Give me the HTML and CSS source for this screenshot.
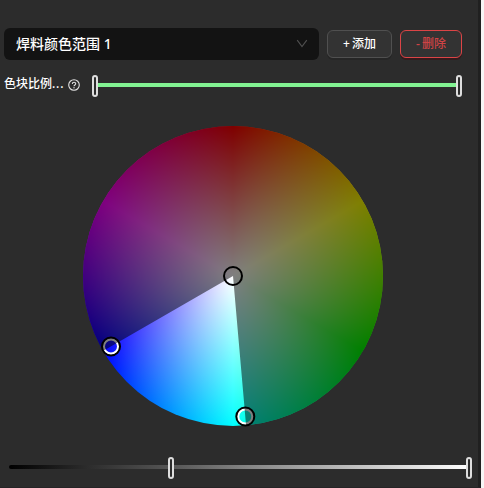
FILE: index.html
```html
<!DOCTYPE html>
<html lang="zh-CN">
<head>
<meta charset="utf-8">
<title>焊料颜色范围</title>
<link rel="stylesheet" href="styles.css">
</head>
<body>
<main class="panel">
  <div class="toolbar">
    <div class="select">
      <span>焊料颜色范围 1</span>
      <svg class="chevron" width="12" height="12" viewBox="0 0 12 12"><path d="M1.2 2.2 6 8.6l4.8-6.4" fill="none" stroke="#505050" stroke-width="1.1"/></svg>
    </div>
    <button class="btn btn-add"><span>+</span><span>添加</span></button>
    <button class="btn btn-delete"><span>-</span><span>删除</span></button>
  </div>
  <div class="ratio">
    <span class="label">色块比例<span class="dots">...</span></span>
    <svg class="help" width="12" height="12" viewBox="0 0 12 12"><circle cx="6" cy="6" r="5.3" fill="none" stroke="#e2e2e2" stroke-width="1.1"/><path d="M4.3 4.9C4.3 2.6 7.8 2.7 7.7 4.8 7.7 6 6 5.9 6 7.3" fill="none" stroke="#e2e2e2" stroke-width="1.1"/><circle cx="6" cy="8.8" r=".7" fill="#e2e2e2"/></svg>
    <div class="slider slider-ratio"><i class="thumb thumb-start"></i><i class="thumb thumb-end"></i></div>
  </div>
  <div class="wheel">
    <svg class="marks" width="300" height="300" viewBox="0 0 300 300">
      <defs><clipPath id="disc"><circle cx="150" cy="150" r="150"/></clipPath></defs>
      <g fill="none" stroke="#fff" stroke-width="2.4">
        <circle cx="28" cy="220.5" r="7.2"/>
        <circle cx="162.3" cy="290.5" r="7.2"/>
      </g>
      <path clip-path="url(#disc)" d="M150 150 L-109.8 300 L-200 -200 H500 V500 H180.6Z" fill="#000" fill-opacity=".5"/>
      <g fill="none" stroke="#000" stroke-width="2">
        <circle cx="28" cy="220.5" r="9"/>
        <circle cx="162.3" cy="290.5" r="9"/>
        <circle cx="150" cy="150" r="9"/>
      </g>
    </svg>
  </div>
  <div class="slider slider-value"><i class="thumb thumb-low"></i><i class="thumb thumb-end"></i></div>
</main>
</body>
</html>
```
FILE: styles.css
```css
* { box-sizing: border-box; }
body {
  margin: 0;
  height: 488px;
  overflow: hidden;
  background: #f7f5f5;
  color: #fff;
  font-family: "Noto Sans", "Noto Sans CJK SC", sans-serif;
}
.panel {
  width: 481px;
  height: 488px;
  padding: 28px 0 0 4px;
  background: #2c2c2c;
  border-right: 3px solid #202020;
  border-bottom: 1px solid #262426;
}
.toolbar { display: flex; gap: 8px; }
.select {
  width: 315px;
  height: 32px;
  padding: 0 11px 0 12px;
  display: flex;
  align-items: center;
  justify-content: space-between;
  border-radius: 6px;
  background: #131313;
  font-size: 14px;
  line-height: 20px;
  font-weight: 500;
}
.btn {
  width: 65px;
  height: 28px;
  margin-top: 2px;
  padding: 0 0 1px;
  display: flex;
  align-items: center;
  justify-content: center;
  gap: 2px;
  border: 1px solid #505050;
  border-radius: 6px;
  background: #333;
  box-shadow: 0 2px 0 #262626;
  color: #fff;
  font: 500 12px/18px "Noto Sans", "Noto Sans CJK SC", sans-serif;
}
.btn-delete {
  width: 62px;
  border-color: #dc4446;
  color: #d04345;
  box-shadow: 0 2px 0 #331b1d;
}
.ratio {
  height: 22px;
  margin-top: 14px;
  display: flex;
  align-items: center;
}
.label {
  width: 64px;
  font-size: 12px;
  line-height: 18px;
  font-weight: 500;
  white-space: nowrap;
  margin-top: -2px;
}
.dots { letter-spacing: 0.8px; }
.help { margin-right: 15px; }
.slider {
  position: relative;
  height: 4px;
  border-radius: 2px;
}
.slider-ratio { width: 364px; background: #82f392; }
.thumb {
  position: absolute;
  top: -8px;
  width: 6px;
  height: 22px;
  margin-left: -3px;
  border: 2px solid #dedede;
  border-radius: 3px;
  background: #2c2c2c;
}
.thumb-start { left: 0; }
.thumb-end { left: 100%; }
.thumb-low { left: 162px; }
.wheel {
  width: 300px;
  height: 300px;
  margin: 30px 0 0 79px;
  border-radius: 50%;
  background:
    radial-gradient(circle closest-side, #fff, rgba(255, 255, 255, 0)),
    conic-gradient(#f00, #ff0, #0f0, #0ff, #00f, #f0f, #f00);
}
.marks { display: block; overflow: visible; }
.slider-value {
  width: 460px;
  margin: 39px 0 0 5px;
  background: linear-gradient(90deg, #000, #2c2c2c 17%, #555 35%, #858585 52%, #fff);
}
```
